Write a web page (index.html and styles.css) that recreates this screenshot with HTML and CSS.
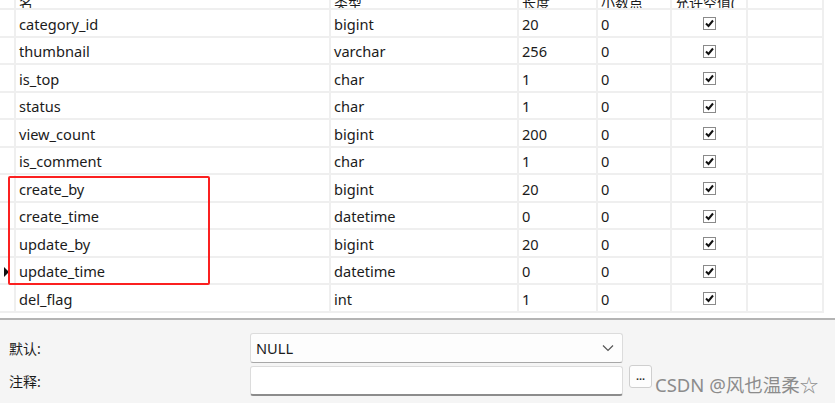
FILE: index.html
```html
<!DOCTYPE html>
<html lang="zh-CN">

<head>
    <meta charset="UTF-8">
    <meta name="viewport" content="width=device-width, initial-scale=1.0">
    <title>表设计</title>
    <link rel="stylesheet" href="styles.css">
</head>

<body>

    <div class="designer">
        <div class="grid">
            <div class="row head">
                <div class="gutter"></div>
                <div class="cell"><span>名</span></div>
                <div class="cell"><span>类型</span></div>
                <div class="cell"><span>长度</span></div>
                <div class="cell"><span>小数点</span></div>
                <div class="cell"><span>允许空值(</span></div>
                <div class="cell"></div>
            </div>
            <div id="rows"></div>
            <div class="highlight"></div>
        </div>

        <div class="props">
            <div class="prop">
                <label>默认:</label>
                <div class="select">
                    <span>NULL</span>
                    <svg width="12" height="8" viewBox="0 0 12 8"><path d="M1 1.5 L6 6.5 L11 1.5" fill="none" stroke="#555" stroke-width="1.2"/></svg>
                </div>
            </div>
            <div class="prop">
                <label>注释:</label>
                <div class="input"></div>
                <button class="more">...</button>
                <span class="mark">CSDN @风也温柔☆</span>
            </div>
        </div>
    </div>

    <script>
        const fields = [
            ["category_id", "bigint", "20"],
            ["thumbnail", "varchar", "256"],
            ["is_top", "char", "1"],
            ["status", "char", "1"],
            ["view_count", "bigint", "200"],
            ["is_comment", "char", "1"],
            ["create_by", "bigint", "20"],
            ["create_time", "datetime", "0"],
            ["update_by", "bigint", "20"],
            ["update_time", "datetime", "0", true],
            ["del_flag", "int", "1"]
        ];

        const tick = '<span class="check"><svg width="11" height="11" viewBox="0 0 11 11"><path d="M2 5.5 L4.5 8 L9 2.5" fill="none" stroke="#111" stroke-width="2"/></svg></span>';

        let html = "";
        fields.forEach(function (f) {
            html += '<div class="row">' +
                '<div class="gutter">' + (f[3] ? '<span class="pointer"></span>' : '') + '</div>' +
                '<div class="cell">' + f[0] + '</div>' +
                '<div class="cell">' + f[1] + '</div>' +
                '<div class="cell">' + f[2] + '</div>' +
                '<div class="cell">0</div>' +
                '<div class="cell center">' + tick + '</div>' +
                '<div class="cell"></div>' +
                '</div>';
        });
        document.getElementById("rows").innerHTML = html;
    </script>
</body>

</html>
```

FILE: styles.css
```css
/* Page */
body {
    margin: 0;
    font-family: "Noto Sans", "Noto Sans CJK SC", sans-serif;
    font-size: 14.6px;
    color: #1b1b1b;
    background: #f5f5f5;
    width: 835px;
    height: 403px;
    overflow: hidden;
}

.designer {
    display: flex;
    flex-direction: column;
    height: 403px;
}

/* Field grid */
.grid {
    position: relative;
    background: #ffffff;
    border-bottom: 2px solid #b4b4b4;
    padding-bottom: 5px;
}

.row {
    display: grid;
    grid-template-columns: 16px 315px 188px 79px 74px 76px 76px 11px;
    height: 27.5px;
}

.row > div {
    border-right: 2px solid #efefef;
    border-bottom: 2px solid #efefef;
    box-sizing: border-box;
}

.cell {
    display: flex;
    align-items: center;
    padding: 2px 0 0 3px;
    white-space: nowrap;
    overflow: hidden;
}

.cell.center {
    justify-content: center;
    padding-left: 0;
}

/* Header row only shows its lower edge */
.row.head {
    height: 10px;
}

.row.head .cell {
    align-items: flex-end;
    padding-top: 0;
}

.row.head .cell span {
    line-height: 14px;
    margin-bottom: -2px;
    font-size: 14px;
}

.gutter {
    display: flex;
    align-items: center;
}

.pointer {
    width: 0;
    height: 0;
    border-top: 5px solid transparent;
    border-bottom: 5px solid transparent;
    border-left: 5px solid #111;
    margin: 3px 0 0 4px;
}

.check {
    width: 13px;
    height: 13px;
    border: 1px solid #8a8a8a;
    box-sizing: border-box;
    background: #ffffff;
    display: flex;
    align-items: center;
    justify-content: center;
}

.highlight {
    position: absolute;
    left: 8px;
    top: 176px;
    width: 198px;
    height: 105px;
    border: 2px solid #fb2020;
    border-radius: 2px;
}

/* Properties panel */
.props {
    padding: 13px 0 0 9px;
    display: flex;
    flex-direction: column;
    gap: 2px;
}

.prop {
    display: flex;
    align-items: center;
}

.prop label {
    width: 241px;
    font-size: 14px;
}

.select,
.input {
    width: 373px;
    height: 30px;
    box-sizing: border-box;
    border: 1px solid #dcdcdc;
    border-bottom-color: #a8a8a8;
    border-radius: 3px;
    background: #ffffff;
}

.select {
    display: flex;
    align-items: center;
    justify-content: space-between;
    padding: 0 8px 0 5px;
    background: #fdfdfd;
}

.input {
    border-bottom: 2px solid #8c8c8c;
}

.more {
    margin-left: 6px;
    width: 23px;
    height: 23px;
    padding: 0;
    border: 1px solid #cfcfcf;
    border-radius: 3px;
    background: #fdfdfd;
    font-size: 11px;
    line-height: 10px;
    color: #333;
    font-weight: bold;
    align-self: flex-start;
}

.mark {
    margin-left: 3px;
    font-family: "Noto Sans", "Noto Sans CJK SC", sans-serif;
    font-size: 18.5px;
    color: #8c8c8c;
    margin-top: 6px;
    white-space: nowrap;
}
```
